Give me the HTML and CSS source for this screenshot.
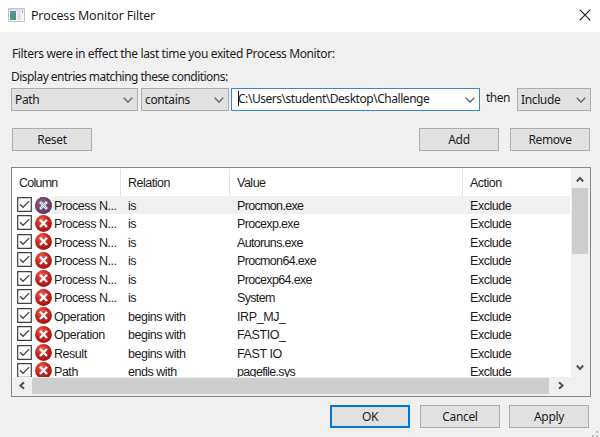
FILE: index.html
```
<!DOCTYPE html>
<html lang="en">
<head>
<meta charset="utf-8">
<title>Process Monitor Filter</title>
<link rel="stylesheet" href="styles.css">
</head>
<body>
<svg class="defs" aria-hidden="true">
  <defs>
    <radialGradient id="red" cx=".38" cy=".3" r=".75"><stop offset="0" stop-color="#ee6a5c"/><stop offset=".45" stop-color="#cf2822"/><stop offset="1" stop-color="#9a1413"/></radialGradient>
    <symbol id="check" viewBox="0 0 15 15"><path d="M.7.7h13.6v13.6H.7z" fill="#fff" stroke="#404040" stroke-width="1.2"/><path d="M3 7.2 6 10.3 12.2 4.1" fill="none" stroke="#444" stroke-width="1.25"/></symbol>
    <symbol id="cross" viewBox="0 0 17 17"><circle cx="8.5" cy="8.5" r="8.4" fill="url(#red)"/><path d="m5 4.8 7 7.2m0-7.2-7 7.2" stroke="#fff" stroke-width="2.3"/></symbol>
    <symbol id="cross-sel" viewBox="0 0 17 17"><circle cx="8.5" cy="8.5" r="8.4" fill="url(#red)"/><circle cx="8.5" cy="8.5" r="8.4" fill="#315f9f" fill-opacity=".5"/><path d="m5 4.8 7 7.2m0-7.2-7 7.2" stroke="#dce8f4" stroke-width="2.6"/><path d="m6 6 5 5m0-5-5 5" stroke="#4878ad" stroke-width=".8" stroke-dasharray="1 1"/><circle cx="8.5" cy="8.5" r="7.7" fill="none" stroke="#27508c" stroke-width="1.2" stroke-dasharray="1.5 1.5"/></symbol>
    <symbol id="down" viewBox="0 0 10 6"><path d="m.7.8 4.3 4.2L9.3.8" fill="none" stroke="#666" stroke-width="1.3"/></symbol>
    <symbol id="arrow" viewBox="0 0 8 7"><path d="m.8 5.5 3.2-3.6 3.2 3.6" fill="none" stroke="#505050" stroke-width="2"/></symbol>
  </defs>
</svg>
<main class="dialog">
  <header class="titlebar">
    <svg class="app" viewBox="0 0 17 14"><defs><linearGradient id="pane" x2="1" y2="1"><stop stop-color="#5c93ad"/><stop offset="1" stop-color="#4e9379"/></linearGradient></defs><path d="M.5.5h16v13H.5z" fill="#f5f7f8" stroke="#bfc5c9"/><path d="M1 1h15v2H1z" fill="#d9dfe3"/><path d="M2 3h6v9H2z" fill="url(#pane)"/><path d="M9 3h4v9H9z" fill="#dce4ea"/><path d="M14 3h1v2h-1z" fill="#6cae91"/></svg>
    <h1>Process Monitor Filter</h1>
    <svg class="close" viewBox="0 0 12 12"><path d="m.7.7 10.6 10.6m0-10.6L.7 11.3" stroke="#222" stroke-width="1.2"/></svg>
  </header>
  <p class="note">Filters were in effect the last time you exited Process Monitor:</p>
  <p class="label">Display entries matching these conditions:</p>
  <div class="conditions">
    <div class="combo column"><span>Path</span><svg><use href="#down"/></svg></div>
    <div class="combo relation"><span>contains</span><svg><use href="#down"/></svg></div>
    <div class="combo value"><i class="caret"></i><span>C:\Users\student\Desktop\Challenge</span><svg><use href="#down"/></svg></div>
    <span class="then">then</span>
    <div class="combo action"><span>Include</span><svg><use href="#down"/></svg></div>
  </div>
  <div class="edit">
    <button class="reset">Reset</button><button class="add">Add</button><button class="remove">Remove</button>
  </div>
  <section class="list">
    <div class="table">
      <div class="row head"><span>Column</span><span>Relation</span><span>Value</span><span>Action</span></div>
      <div class="row selected"><span><svg class="chk"><use href="#check"/></svg><svg class="ico"><use href="#cross-sel"/></svg><b>Process N...</b></span><span>is</span><span>Procmon.exe</span><span>Exclude</span></div>
      <div class="row"><span><svg class="chk"><use href="#check"/></svg><svg class="ico"><use href="#cross"/></svg><b>Process N...</b></span><span>is</span><span>Procexp.exe</span><span>Exclude</span></div>
      <div class="row"><span><svg class="chk"><use href="#check"/></svg><svg class="ico"><use href="#cross"/></svg><b>Process N...</b></span><span>is</span><span>Autoruns.exe</span><span>Exclude</span></div>
      <div class="row"><span><svg class="chk"><use href="#check"/></svg><svg class="ico"><use href="#cross"/></svg><b>Process N...</b></span><span>is</span><span>Procmon64.exe</span><span>Exclude</span></div>
      <div class="row"><span><svg class="chk"><use href="#check"/></svg><svg class="ico"><use href="#cross"/></svg><b>Process N...</b></span><span>is</span><span>Procexp64.exe</span><span>Exclude</span></div>
      <div class="row"><span><svg class="chk"><use href="#check"/></svg><svg class="ico"><use href="#cross"/></svg><b>Process N...</b></span><span>is</span><span>System</span><span>Exclude</span></div>
      <div class="row"><span><svg class="chk"><use href="#check"/></svg><svg class="ico"><use href="#cross"/></svg><b>Operation</b></span><span>begins with</span><span class="caps">IRP_MJ_</span><span>Exclude</span></div>
      <div class="row"><span><svg class="chk"><use href="#check"/></svg><svg class="ico"><use href="#cross"/></svg><b>Operation</b></span><span>begins with</span><span class="caps">FASTIO_</span><span>Exclude</span></div>
      <div class="row"><span><svg class="chk"><use href="#check"/></svg><svg class="ico"><use href="#cross"/></svg><b>Result</b></span><span>begins with</span><span class="caps">FAST IO</span><span>Exclude</span></div>
      <div class="row"><span><svg class="chk"><use href="#check"/></svg><svg class="ico"><use href="#cross"/></svg><b>Path</b></span><span>ends with</span><span>pagefile.sys</span><span>Exclude</span></div>
    </div>
    <div class="vbar"><svg class="up"><use href="#arrow"/></svg><i class="thumb"></i><svg class="dn"><use href="#arrow"/></svg></div>
    <div class="hbar"><svg class="lt"><use href="#arrow"/></svg><i class="thumb"></i><svg class="rt"><use href="#arrow"/></svg></div>
  </section>
  <footer>
    <button class="ok">OK</button><button class="cancel">Cancel</button><button class="apply">Apply</button>
  </footer>
  <svg class="grip" viewBox="0 0 6 6"><path d="M4 0h2v2H4zM0 4h2v2H0zM4 4h2v2H4z" fill="#bcbcbc"/></svg>
</main>
</body>
</html>
```
FILE: styles.css
```
* { box-sizing: border-box; }
body { margin: 0; background: #f0f0f0; overflow: hidden; }
svg { display: block; flex: none; }
.defs { position: absolute; width: 0; height: 0; }
.dialog {
  position: relative;
  width: 600px;
  height: 437px;
  background: #f0f0f0;
  color: #1c1c1c;
  font: 12px/16px "Noto Sans", sans-serif;
  letter-spacing: -.37px;
  white-space: nowrap;
}
.titlebar { display: flex; align-items: center; height: 32px; padding: 0 9px 2px 8px; background: #fff; }
.app { width: 17px; height: 14px; }
h1 { flex: 1; margin: 1px 0 0 6px; font: 12.5px/16px "Open Sans", sans-serif; letter-spacing: -.16px; color: #111; }
.close { width: 12px; height: 12px; }
p { margin: 0; }
.note { padding: 14px 0 0 12px; }
.label { padding: 7px 0 0 11px; letter-spacing: -.53px; }
.conditions { display: flex; height: 23px; margin: 3px 0 0 11px; }
.combo {
  display: flex;
  align-items: center;
  justify-content: space-between;
  height: 23px;
  padding: 0 4px 0 3px;
  border: 1px solid #adadad;
  background: #e1e1e1;
}
.combo svg { width: 10px; height: 6px; }
.column { width: 127px; }
.relation { width: 88px; margin-left: 3px; }
.value { position: relative; width: 249px; margin-left: 2px; padding-left: 6px; background: #fff; border-color: #3586d8; letter-spacing: -.46px; }
.value span { padding-bottom: 1px; }
.caret { position: absolute; left: 6px; top: 2px; width: 1px; height: 15px; background: #111; }
.then { width: 31px; margin-left: 6px; padding-top: 2px; letter-spacing: -.5px; }
.action { width: 74px; }
button {
  width: 80px;
  height: 23px;
  padding: 0;
  border: 1px solid #adadad;
  border-radius: 0;
  background: #e1e1e1;
  color: inherit;
  font: inherit;
  letter-spacing: -.35px;
}
.edit { display: flex; padding: 17px 0 0 12px; }
.add { margin-left: 327px; }
.remove { margin-left: 11px; }
.list {
  display: grid;
  grid-template: 209px 19px / 559px 19px;
  width: 580px;
  height: 230px;
  margin: 16px 0 0 11px;
  border: 1px solid #828790;
  background: #f0f0f0;
  font: 12.5px/18px "Liberation Sans", sans-serif;
}
.table { overflow: hidden; background: #fff; border-right: 1px solid #fff; }
.row { display: grid; grid-template-columns: 109px 109px 233px 107px; height: 18.45px; }
.row > span { display: flex; align-items: center; padding: 1px 0 0 7px; letter-spacing: -.46px; }
.row > span:first-child { padding-left: 5px; }
.row > span:nth-child(3) { letter-spacing: -.66px; }
.row > .caps:nth-child(3) { letter-spacing: -.4px; }
.row b { font-weight: normal; }
.row.head { height: 28px; padding-top: 1px; }
.row.head > span { border-right: 1px solid #e4e4e4; letter-spacing: -.5px; }
.row.head > span:first-child { padding-left: 7px; letter-spacing: -.75px; }
.row.head > span:last-child { border: 0; }
.selected { background: linear-gradient(90deg, #fff 40px, #f0f0f0 40px); }
.chk { width: 15px; height: 15px; margin: -3px 3px 0 0; }
.ico { width: 17px; height: 17px; margin: -2px 2px 0 0; }
.vbar { display: flex; flex-direction: column; padding: 8px 0 6px 1px; }
.vbar svg, .hbar svg { width: 8px; height: 7px; }
.vbar svg { margin-left: 4px; }
.vbar .thumb { width: 16px; height: 66px; margin: 5px 0 auto; background: #cdcdcd; }
.dn { transform: rotate(180deg); }
.hbar { grid-column: 1 / 3; display: flex; align-items: center; padding: 0 1px 2px 6px; }
.hbar .thumb { width: 517px; height: 16px; margin: 0 8px 0 6px; background: #cdcdcd; }
.lt { transform: rotate(-90deg); }
.rt { transform: rotate(90deg); }
footer { display: flex; padding: 8px 0 0 330px; }
.ok { border: 2px solid #0078d7; }
.cancel { margin-left: 10px; }
.apply { margin-left: 9px; }
.grip { position: absolute; right: 2px; bottom: 0; width: 6px; height: 6px; }
```
